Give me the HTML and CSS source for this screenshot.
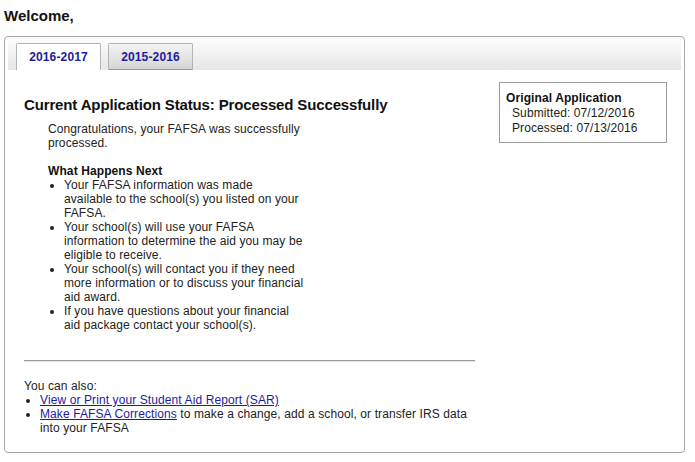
FILE: index.html
```html
<!DOCTYPE html>
<html lang="en">
<head>
  <meta charset="UTF-8" />
  <title>FAFSA | My FAFSA</title>
  <link rel="stylesheet" href="styles.css">
</head>
<body>
  <h1 class="welcome">Welcome,</h1>

  <div class="panel">
    <!-- year tabs -->
    <ul class="tabs">
      <li class="tab active"><a href="#">2016-2017</a></li>
      <li class="tab"><a href="#">2015-2016</a></li>
    </ul>

    <div class="tab-body">
      <div class="status-row">
        <div class="status-main">
          <h2>Current Application Status: Processed Successfully</h2>
          <div class="status-text">
            <p>Congratulations, your FAFSA was successfully processed.</p>
            <h3>What Happens Next</h3>
            <ul>
              <li>Your FAFSA information was made available to the school(s) you listed on your FAFSA.</li>
              <li>Your school(s) will use your FAFSA information to determine the aid you may be eligible to receive.</li>
              <li>Your school(s) will contact you if they need more information or to discuss your financial aid award.</li>
              <li>If you have questions about your financial aid package contact your school(s).</li>
            </ul>
          </div>
        </div>

        <div class="app-box">
          <div class="app-title">Original Application</div>
          <div class="app-line">Submitted: 07/12/2016</div>
          <div class="app-line">Processed: 07/13/2016</div>
        </div>
      </div>

      <hr class="divider">

      <div class="also">
        <p>You can also:</p>
        <ul>
          <li><a href="#">View or Print your Student Aid Report (SAR)</a></li>
          <li><a href="#">Make FAFSA Corrections</a> to make a change, add a school, or transfer IRS data into your FAFSA</li>
        </ul>
      </div>
    </div>
  </div>
</body>
</html>
```

FILE: styles.css
```css
:root {
  --text: #222;
  --link: #1c1c9e;
  --line: #a8a8a8;
}
body {
  margin: 0;
  padding: 7px 4px;
  font-family: "Liberation Sans", Arial, sans-serif;
  font-size: 12px;
  line-height: 14px;
  letter-spacing: 0.1px;
  color: var(--text);
  background: #fff;
}
.welcome {
  margin: 0 0 11px 0;
  font-size: 15px;
  line-height: 18px;
  letter-spacing: 0;
  color: #111;
}
/* outer panel */
.panel {
  width: 681px;
  box-sizing: border-box;
  border: 1px solid var(--line);
  border-radius: 4px;
  padding: 1px 3px 3px;
}
/* tabs */
.tabs {
  list-style: none;
  margin: 0;
  padding: 5px 8px 0;
  display: flex;
  gap: 7px;
  background: linear-gradient(#fdfdfd, #e6e6e6);
}
.tab {
  width: 85px;
  height: 27px;
  box-sizing: border-box;
  border: 1px solid #b4b4b4;
  border-bottom: none;
  border-radius: 2px 2px 0 0;
  background: linear-gradient(#f4f4f4, #d4d4d4);
  box-shadow: inset 0 -1px 0 #9a9a9a;
  display: flex;
  align-items: center;
  justify-content: center;
}
.tab.active {
  background: #fff;
  box-shadow: none;
}
.tab a {
  color: var(--link);
  text-decoration: none;
  font-weight: bold;
  font-size: 12px;
  letter-spacing: 0.15px;
}
/* tab content */
.tab-body {
  padding: 12px 14px 14px 16px;
}
.status-row {
  display: flex;
  justify-content: space-between;
  align-items: flex-start;
}
.status-main h2 {
  margin: 14px 0 8px 0;
  font-size: 15px;
  line-height: 18px;
  letter-spacing: -0.14px;
  color: #111;
}
.status-text {
  width: 256px;
  margin-left: 24px;
}
.status-text p {
  margin: 0 0 14px 0;
}
.status-text h3 {
  margin: 0;
  font-size: 12px;
  line-height: 14px;
  color: #111;
}
.status-text ul,
.also ul {
  margin: 0;
  padding-left: 16px;
}
.app-box {
  width: 168px;
  box-sizing: border-box;
  border: 1px solid #9c9c9c;
  padding: 8px 6px 6px;
  line-height: 15px;
}
.app-title {
  font-weight: bold;
  color: #111;
}
.app-line {
  padding-left: 6px;
}
.divider {
  width: 451px;
  margin: 28px 0 17px 0;
  border: none;
  border-top: 1px solid #9a9a9a;
  border-bottom: 1px solid #e4e4e4;
}
.also {
  width: 451px;
}
.also p {
  margin: 0;
}
.also a {
  color: var(--link);
}
```
